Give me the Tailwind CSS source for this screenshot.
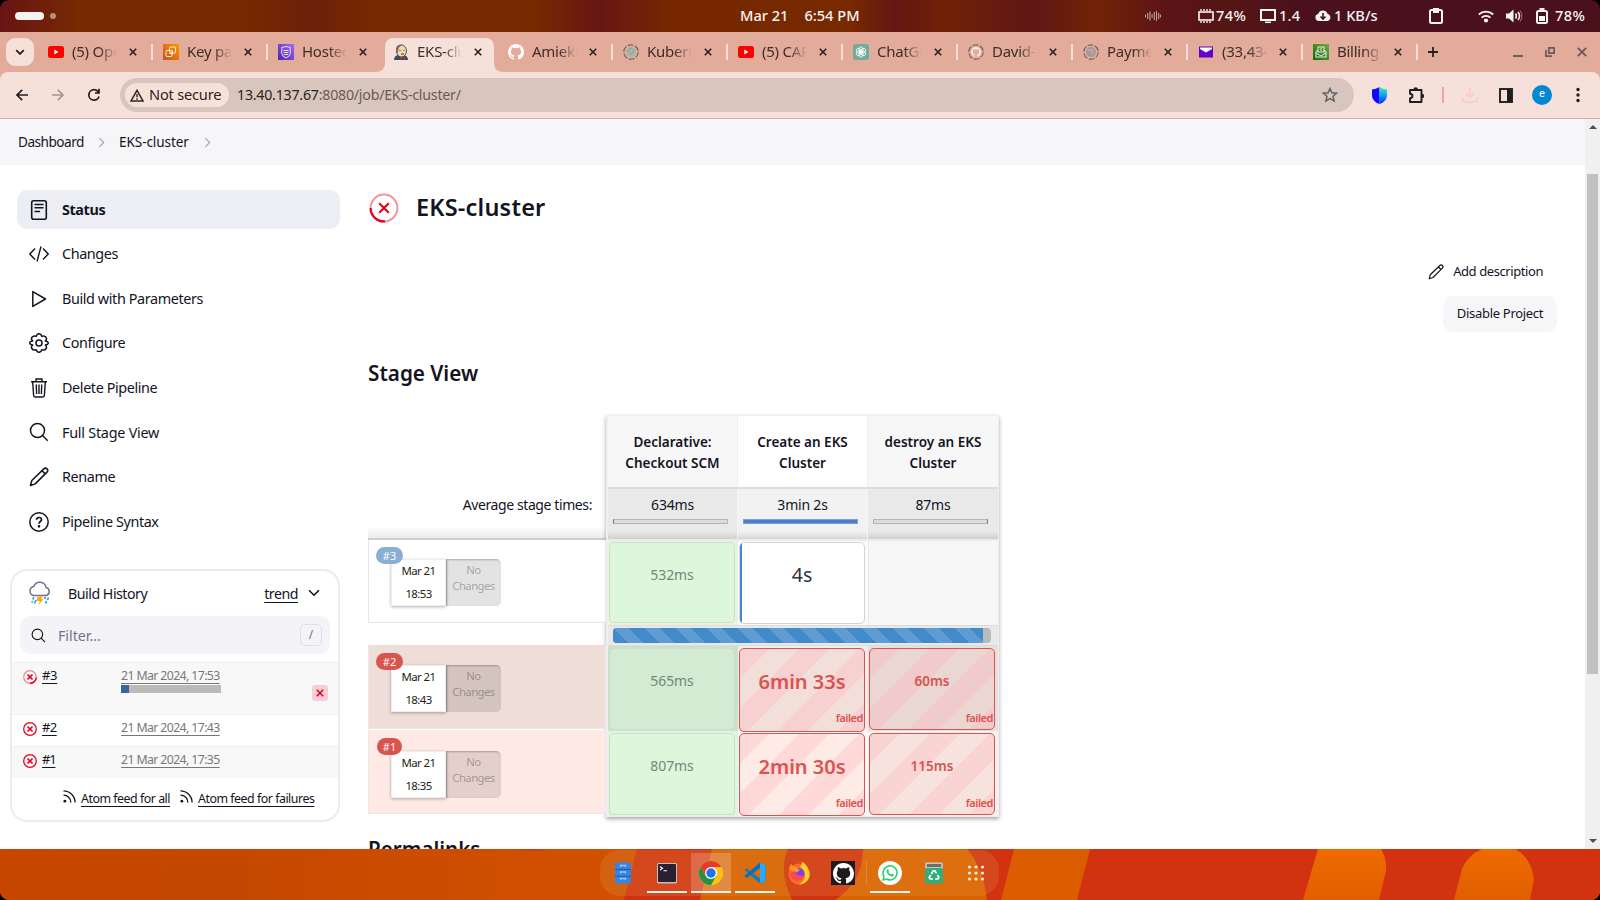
<!DOCTYPE html>
<html lang="en">
<head>
<meta charset="utf-8">
<title>EKS-cluster [Jenkins]</title>
<script src="https://cdn.jsdelivr.net/npm/@tailwindcss/browser@4"></script>
</head>
<body class="bg-black">
<svg class="hidden">
  <defs>
    <symbol id="close" viewBox="0 0 8 8"><path d="M.8.8l6.400 6.400M7.200.8L.8 7.200" stroke="currentColor" stroke-width="1.600"/></symbol>
    <symbol id="chev" viewBox="0 0 8 12"><path d="M1.500 1l5 5-5 5" fill="none" stroke="currentColor" stroke-width="1.400"/></symbol>
    <symbol id="pencil" viewBox="0 0 20 20"><path d="M1.500 18.500l1.300-5L14.800 1.900a2.200 2.200 0 013.200 3.200L6.200 16.900zM13 3.700l3.200 3.200" fill="none" stroke="currentColor" stroke-width="1.500" stroke-linejoin="round"/></symbol>
    <symbol id="search" viewBox="0 0 20 20"><circle cx="8.500" cy="8.500" r="7" fill="none" stroke="currentColor" stroke-width="1.500"/><path d="M13.500 13.500l5.200 5.200" stroke="currentColor" stroke-width="1.500"/></symbol>
    <symbol id="fail" viewBox="0 0 14 14"><circle cx="7" cy="7" r="6.300" fill="none" stroke="#e6001f" stroke-width="1.300"/><path d="M4.500 4.500l5 5m0-5l-5 5" stroke="#e6001f" stroke-width="1.700"/></symbol>
    <symbol id="feed" viewBox="0 0 14 14"><circle cx="2" cy="12" r="1.500" fill="currentColor"/><path d="M.5 5.500a8 8 0 018 8M.5 1a12.500 12.500 0 0112.500 12.500" fill="none" stroke="currentColor" stroke-width="1.400"/></symbol>
    <symbol id="yt" viewBox="0 0 16 12"><rect width="16" height="12" rx="2.500" fill="#f00"/><path d="M6.300 3.500L10.500 6 6.300 8.500z" fill="#fff"/></symbol>
    <symbol id="gh" viewBox="0 0 16 16"><path fill="currentColor" d="M8 0C3.580 0 0 3.580 0 8c0 3.540 2.290 6.530 5.470 7.590.4.070.55-.17.55-.38 0-.19-.01-.82-.01-1.490-2.010.37-2.530-.49-2.690-.94-.09-.23-.48-.94-.82-1.130-.28-.15-.68-.52-.01-.53.63-.01 1.080.58 1.230.82.72 1.210 1.870.87 2.330.66.070-.52.28-.87.51-1.070-1.780-.2-3.640-.89-3.640-3.950 0-.87.31-1.590.82-2.150-.08-.2-.36-1.020.08-2.120 0 0 .67-.21 2.200.82a7.600 7.600 0 014 0c1.530-1.040 2.200-.82 2.200-.82.44 1.100.16 1.920.08 2.120.51.56.82 1.270.82 2.150 0 3.070-1.870 3.750-3.650 3.950.29.25.54.73.54 1.480 0 1.070-.01 1.930-.01 2.200 0 .21.15.46.55.38A8 8 0 0016 8c0-4.420-3.580-8-8-8z"/></symbol>
    <symbol id="knot" viewBox="0 0 16 16"><g fill="none" stroke="currentColor" stroke-width="1"><ellipse cx="8" cy="5.200" rx="2.600" ry="3.600"/><ellipse cx="8" cy="5.200" rx="2.600" ry="3.600" transform="rotate(60 8 8)"/><ellipse cx="8" cy="5.200" rx="2.600" ry="3.600" transform="rotate(120 8 8)"/><ellipse cx="8" cy="5.200" rx="2.600" ry="3.600" transform="rotate(180 8 8)"/><ellipse cx="8" cy="5.200" rx="2.600" ry="3.600" transform="rotate(240 8 8)"/><ellipse cx="8" cy="5.200" rx="2.600" ry="3.600" transform="rotate(300 8 8)"/></g></symbol>
  </defs>
</svg>
<div class="w-[1600px] h-[900px] overflow-hidden rounded-[9px] flex flex-col text-[#14141f] font-['Noto_Sans',sans-serif]">

  <!-- System bar -->
  <header class="h-8 shrink-0 relative flex items-center text-[#f6f5f4] text-[14.6px] font-medium bg-[linear-gradient(90deg,#681416_0px,#772900_80px,#772900_240px,#6e2009_310px,#772900_380px,#772900_535px,#681614_600px,#762700_670px,#772900_850px,#641613_895px,#712206_945px,#5e1716_1030px,#722206_1095px,#5b1415_1170px,#551515_1230px,#4a111c_1300px,#4a111c_1600px)]">
    <div class="ml-[15px] w-[29px] h-2 rounded-full bg-[#f4f3f2]"></div>
    <div class="ml-[6px] w-[6px] h-[6px] rounded-full bg-[#b58f80]"></div>
    <div class="absolute left-[740px] flex gap-4 whitespace-nowrap"><span>Mar 21</span><span>6:54 PM</span></div>
    <div class="absolute left-[1145px] top-0 h-8 flex items-center whitespace-nowrap">
      <svg class="w-4 h-3" viewBox="0 0 16 12" stroke="#b9a09f" stroke-width="1.100"><path d="M.5 4.500v3M2.700 3v6M4.900 1.500v9M7.100 4v4M9.300 2v8M11.500 1v10M13.700 3v6M15.500 4.500v3"/></svg>
      <div class="ml-[37px] w-[62px] flex items-center gap-[2px]"><svg class="w-4 h-4" viewBox="0 0 16 16" fill="none" stroke="currentColor"><rect x="1" y="4" width="14" height="8" stroke-width="1.600"/><path d="M3 1v2m3-2v2m3-2v2m3-2v2M3 13v2m3-2v2m3-2v2m3-2v2" stroke-width="1.400"/></svg><span class="tracking-[0.4px]">74%</span></div>
      <div class="w-[55px] flex items-center gap-[3px]"><svg class="w-4 h-4" viewBox="0 0 16 16" fill="none" stroke="currentColor"><rect x="1" y="2" width="14" height="10" stroke-width="2"/><path d="M5 14.300h6" stroke-width="1.500"/></svg><span class="tracking-[0.2px]">1.4</span></div>
      <div class="w-[114px] flex items-center gap-[3px]"><svg class="w-4 h-4" viewBox="0 0 16 16"><path d="M4 13a3.600 3.600 0 01-.8-7.100A5 5 0 0112.700 6 3.600 3.600 0 0112.500 13z" fill="currentColor"/><path d="M8 5v6M5.500 8.500L8 11l2.500-2.500" fill="none" stroke="#4a111c" stroke-width="1.600"/></svg><span>1 KB/s</span></div>
      <svg class="w-[14px] h-4" viewBox="0 0 14 16"><rect x="1" y="2" width="12" height="13" rx="1.500" fill="none" stroke="currentColor" stroke-width="2"/><path d="M4 0h6v5H4z" fill="currentColor"/></svg>
      <svg class="ml-[35px] w-4 h-4" viewBox="0 0 16 16" fill="none" stroke="currentColor" stroke-width="1.800"><path d="M.8 6.500a10.500 10.500 0 0114.400 0M3.600 9.600a6.400 6.400 0 018.800 0"/><circle cx="8" cy="12.500" r="1.200" fill="currentColor"/></svg>
      <svg class="ml-3 w-[17px] h-4" viewBox="0 0 17 16"><path d="M0 5.500h3L7.500 1.500v13L3 10.500H0z" fill="currentColor"/><path d="M9.500 5.500q1.800 2.500 0 5M12 4q3 4 0 8" fill="none" stroke="currentColor" stroke-width="1.500"/><path d="M14 2.500q4 5.500 0 11" fill="none" stroke="currentColor" stroke-opacity=".45"/></svg>
      <svg class="ml-[13px] w-3 h-4" viewBox="0 0 12 16"><path d="M3.500 0h5v3h-5z" fill="currentColor"/><rect x="1" y="3" width="10" height="12" rx="1.500" fill="none" stroke="currentColor" stroke-width="2"/><path d="M3 8h6v5H3z" fill="currentColor"/></svg>
      <span class="ml-[7px] tracking-[0.4px]">78%</span>
    </div>
  </header>

  <!-- Browser tab strip -->
  <div class="h-10 shrink-0 flex items-end bg-[#e3ab99] text-[15px] text-[#3c2f2c]">
    <div class="ml-[6px] mb-[6px] w-7 h-7 rounded-[9px] bg-[#f6e0da] flex items-center justify-center"><svg class="w-[10px] h-[7px]" viewBox="0 0 10 7"><path d="M1.200 1.200L5 5l3.800-3.800" fill="none" stroke="#222" stroke-width="1.800"/></svg></div>
    <div id="tabs" class="ml-1 flex h-[34px]"></div>
    <svg class="ml-[10px] mb-[15px] w-[10px] h-[10px]" viewBox="0 0 10 10"><path d="M5 0v10M0 5h10" stroke="#222" stroke-width="1.800"/></svg>
    <div class="ml-auto mr-[13px] mb-[15px] flex items-center gap-[22px] text-[#6b5b5a]">
      <svg class="w-[10px] h-[10px]" viewBox="0 0 10 10"><path d="M0 9h10" stroke="currentColor" stroke-width="2"/></svg>
      <svg class="w-[10px] h-[10px]" viewBox="0 0 10 10" fill="none" stroke="currentColor" stroke-width="1.700"><path d="M3.800.9h5.300v5.300H3.800zM.9 3v6.100H7"/></svg>
      <svg class="w-[10px] h-[10px]" viewBox="0 0 10 10"><path d="M.8.8l8.400 8.400m0-8.400L.8 9.200" stroke="currentColor" stroke-width="1.900"/></svg>
    </div>
  </div>

  <!-- Toolbar -->
  <div class="h-[47px] shrink-0 bg-[#e3ab99]"><div class="h-full rounded-t-lg bg-[#f6e0da] border-b border-[#c9b4ad] flex items-center text-[#1f1f1f]">
    <svg class="ml-4 w-3 h-3" viewBox="0 0 12 12" fill="none" stroke="currentColor" stroke-width="1.700"><path d="M12 6H1.200M6.200 .8L1 6l5.200 5.200"/></svg>
    <svg class="ml-6 w-3 h-3" viewBox="0 0 12 12" fill="none" stroke="#a79691" stroke-width="1.700"><path d="M0 6h10.800M5.800 .8L11 6l-5.200 5.200"/></svg>
    <svg class="ml-6 w-3 h-[14px]" viewBox="0 0 12 14" fill="none" stroke="currentColor" stroke-width="1.700"><path d="M11 8.500A5.200 5.200 0 116 1.700c2 0 3.500 1 4.600 2.600M11 .8v4.200H7"/></svg>
    <div class="ml-5 w-[1234px] h-[34px] rounded-full bg-[#d8c5be] flex items-center pl-[5px]">
      <div class="w-[104px] h-6 rounded-full bg-[#f6e0da] flex items-center gap-[5px] pl-[5px] text-[14.600px] tracking-[-0.2px] text-[#2b2422] whitespace-nowrap"><svg class="w-[14px] h-[13px] shrink-0" viewBox="0 0 14 13"><path d="M7 1.300L13 12H1z" fill="none" stroke="#2b2422" stroke-width="1.500"/><path d="M7 5v3.200M7 9.200v1.500" stroke="#2b2422" stroke-width="1.400"/></svg><span>Not secure</span></div>
      <div class="ml-2 text-[14.200px] tracking-[-0.23px] text-[#6a5b57] whitespace-nowrap"><span class="text-[#2b2422]">13.40.137.67</span>:8080/job/EKS-cluster/</div>
      <svg class="ml-auto mr-4 w-4 h-4" viewBox="0 0 16 16"><path d="M8 1.500l1.900 4.300 4.700.4-3.600 3.100 1.100 4.600L8 11.500l-4.100 2.400L5 9.300 1.400 6.200l4.700-.4z" fill="none" stroke="#5f6368" stroke-width="1.500"/></svg>
    </div>
    <svg class="ml-[18px] w-[15px] h-[17px]" viewBox="0 0 15 17"><defs><linearGradient id="sg" x1="0" y1="0" x2="0" y2="1"><stop offset="0" stop-color="#3df0b0"/><stop offset=".5" stop-color="#0a9ff5"/><stop offset="1" stop-color="#0a20ff"/></linearGradient></defs><path d="M7.500 0C5 1.700 2.500 2.300 0 2.500V8c0 5 4 8 7.500 9z" fill="#0a0aff"/><path d="M7.500 0c2.500 1.700 5 2.300 7.500 2.500V8c0 5-4 8-7.500 9z" fill="url(#sg)"/></svg>
    <svg class="ml-[21px] w-[17px] h-[17px]" viewBox="0 0 17 17"><path d="M2 3h11.500v12H2v-3.800q2.500-.2 2.500-2.200T2 6.800z" fill="none" stroke="currentColor" stroke-width="1.900" stroke-linejoin="round"/><path d="M5.500 2.500a2.200 2.200 0 014.400 0zM14 6.800a2.200 2.200 0 010 4.400z" fill="currentColor"/></svg>
    <div class="ml-[17px] w-[2px] h-4 bg-[#e3ab99]"></div>
    <svg class="ml-[18px] w-4 h-4" viewBox="0 0 16 16" fill="none" stroke="#f9cfce" stroke-width="1.900"><path d="M8 0v10M3.800 6L8 10.200 12.200 6M1 11v4h14v-4"/></svg>
    <svg class="ml-[21px] w-[14px] h-[15px]" viewBox="0 0 14 15"><rect x="1" y="1" width="12" height="13" fill="none" stroke="currentColor" stroke-width="1.900"/><path d="M8 1h5v13H8z" fill="currentColor"/></svg>
    <div class="ml-[19px] w-5 h-5 rounded-full bg-[#0288d1] text-white text-[11px] leading-[18px] text-center font-['Roboto',sans-serif]">e</div>
    <svg class="ml-[24px] w-1 h-4" viewBox="0 0 4 16" fill="currentColor"><circle cx="2" cy="2.500" r="1.700"/><circle cx="2" cy="8" r="1.700"/><circle cx="2" cy="13.500" r="1.700"/></svg>
  </div></div>

  <!-- Page viewport -->
  <div class="h-[730px] shrink-0 flex bg-white overflow-hidden">
    <div class="w-[1585px] h-[730px] overflow-hidden">
      <nav class="h-[46px] bg-[#f6f6f9] flex items-center pl-[18px] text-[13.600px]">
        <span class="w-[66px] tracking-[-0.5px] whitespace-nowrap">Dashboard</span>
        <svg class="ml-[14px] w-[7px] h-[11px] text-[#a6a6b8]"><use href="#chev"/></svg>
        <span class="ml-[14px] w-[71px] tracking-[-0.1px] whitespace-nowrap">EKS-cluster</span>
        <svg class="ml-[14px] w-[7px] h-[11px] text-[#a6a6b8]"><use href="#chev"/></svg>
      </nav>
      <div class="flex">
        <!-- Side panel -->
        <aside class="w-[342px] shrink-0 pt-[25px]">
          <div class="ml-[17px] w-[323px] flex flex-col gap-[5.600px] text-[14.400px] tracking-[-0.4px] [&>div]:h-[39px] [&>div]:flex [&>div]:items-center [&>div]:gap-[13px] [&>div]:pl-3 [&_svg]:w-5 [&_svg]:h-5">
            <div class="rounded-[10px] bg-[#edeef3] font-bold"><svg viewBox="0 0 20 20" fill="none" stroke="currentColor" stroke-width="1.600"><rect x="2.700" y=".8" width="14.600" height="18.400" rx="2"/><path d="M6 4.500h8M6 7.800h8M6 11.500h4.500" stroke-width="1.400" stroke-linecap="round"/></svg>Status</div>
            <div><svg viewBox="0 0 20 20" fill="none" stroke="currentColor" stroke-width="1.400"><path d="M6 4.500L.8 10 6 15.500M14 4.500l5.200 5.500-5.200 5.500M12 2.500l-4 15"/></svg>Changes</div>
            <div><svg viewBox="0 0 20 20" fill="none" stroke="currentColor" stroke-width="1.500" stroke-linejoin="round"><path d="M3.800 2.600v14.800L16.500 10z"/></svg>Build with Parameters</div>
            <div><svg viewBox="0 0 20 20" fill="none" stroke="currentColor" stroke-width="1.500" stroke-linejoin="round"><path d="M7.200 3.300Q7.800.7 10 .7t2.800 2.600q2.900-.9 4.200.9 1.300 2-.7 3.800 3 .4 3 2t-3 2q2 1.800.7 3.800-1.300 1.800-4.200.9Q12.200 19.300 10 19.300t-2.800-2.600q-2.900.9-4.200-.9-1.300-2 .7-3.800-3-.4-3-2t3-2Q1.700 6.200 3 4.200q1.300-1.800 4.200-.9z"/><circle cx="10" cy="10" r="3"/></svg>Configure</div>
            <div><svg viewBox="0 0 20 20" fill="none" stroke="currentColor" stroke-width="1.400"><path d="M2 3.700h16M7 3.500V1h6v2.500M3.700 4l.9 13.300q.1 1.700 1.700 1.700h7.400q1.600 0 1.700-1.700L16.300 4M7.300 6.500l.3 9.500M10 6.500V16M12.700 6.500l-.3 9.500"/></svg>Delete Pipeline</div>
            <div class="tracking-[-0.25px]"><svg><use href="#search"/></svg>Full Stage View</div>
            <div><svg><use href="#pencil"/></svg>Rename</div>
            <div><svg viewBox="0 0 20 20" fill="none" stroke="currentColor" stroke-width="1.500"><circle cx="10" cy="10" r="9.200"/><path d="M7.500 7.800Q7.700 5.500 10 5.500t2.500 2.200c0 1.800-2.500 1.900-2.500 4" stroke-width="1.700"/><circle cx="10" cy="14.300" r=".6" fill="currentColor"/></svg>Pipeline Syntax</div>
          </div>

          <section class="ml-[10px] mt-[28px] w-[330px] h-[253px] border-2 border-[#ebebf2] rounded-[17px] overflow-hidden">
            <div class="h-[45px] pb-px flex items-center pl-[16px] pr-[18px] text-[14.200px] tracking-[-0.48px]">
              <svg class="w-6 h-6 shrink-0" viewBox="0 0 24 24"><path d="M5.500 14.500a4.600 4.600 0 01.3-9A6.300 6.300 0 0118 6.500a4.200 4.200 0 01.5 8z" fill="none" stroke="#73738c" stroke-width="1.500"/><path d="M5.800 16l-1 2.500M8 19l-1.500 3.500M17.500 16l-1 2M20.500 16.500l-1 2.500M18.500 20l-1 2.500M4.500 20l-.6 1.500" stroke="#29a3e8" stroke-width="1.700"/><path d="M9.500 15.500h5l-1.200 2.800h2L10.500 24l1.300-4H8.500z" fill="#fda61a"/></svg>
              <span class="ml-[16px]">Build History</span>
              <span class="ml-auto underline underline-offset-[3px]">trend</span>
              <svg class="ml-[10px] w-3 h-2" viewBox="0 0 12 8"><path d="M1 1.200l5 5 5-5" fill="none" stroke="currentColor" stroke-width="1.600"/></svg>
            </div>
            <div class="mx-2 h-[38px] rounded-[10px] bg-[#f3f3f8] flex items-center pl-[11px] pr-2 text-[14.200px] text-[#73738c]">
              <svg class="w-[15px] h-[15px] text-[#14141f]"><use href="#search"/></svg>
              <span class="ml-[12px]">Filter...</span>
              <span class="ml-auto w-[22px] h-[22px] border border-[#dfdfe8] rounded-[5px] text-center text-[12px] leading-5">/</span>
            </div>
            <div class="mt-2 text-[13px]">
              <div class="h-[52px] border-t border-[#efeff4] bg-[#f8f8f8] flex pt-[4px] pl-[11px] relative">
                <svg class="mt-[3px] w-[14px] h-[14px]" viewBox="0 0 14 14" fill="none" stroke="#e6001f"><circle cx="7" cy="7" r="6.300" stroke-opacity=".45" stroke-width="1.300"/><path d="M13.300 7.500A6.300 6.300 0 017 13.300" stroke-width="1.400"/><path d="M4.500 4.500l5 5m0-5l-5 5" stroke-width="1.700"/></svg>
                <span class="ml-[5px] w-[79px] leading-[17px] tracking-[-0.3px]"><u class="underline-offset-[3px]">#3</u></span>
                <div class="leading-[17px] text-[12.300px] tracking-[-0.61px] text-[#77777a] whitespace-nowrap"><span class="underline underline-offset-[3px]">21 Mar 2024, 17:53</span><div class="w-[100px] h-2 bg-[#bababa] mt-[1px]"><div class="w-2 h-2 bg-[#3465a4]"></div></div></div>
                <span class="absolute right-[10px] top-[22px] w-4 h-4 rounded-[3px] bg-[#f7ced5] flex items-center justify-center"><svg class="w-2 h-2 text-[#e6001f]"><use href="#close"/></svg></span>
              </div>
              <div class="h-8 border-t border-[#efeff4] flex pt-[4px] pl-[11px]">
                <svg class="mt-[3px] w-[14px] h-[14px]"><use href="#fail"/></svg><span class="ml-[5px] w-[79px] leading-[17px] tracking-[-0.6px]"><u class="underline-offset-[3px]">#2</u></span><span class="leading-[17px] text-[12.300px] tracking-[-0.61px] text-[#77777a] underline underline-offset-[3px]">21 Mar 2024, 17:43</span>
              </div>
              <div class="h-8 border-t border-[#efeff4] bg-[#f8f8f8] flex pt-[4px] pl-[11px]">
                <svg class="mt-[3px] w-[14px] h-[14px]"><use href="#fail"/></svg><span class="ml-[5px] w-[79px] leading-[17px] tracking-[-1.2px]"><u class="underline-offset-[3px]">#1</u></span><span class="leading-[17px] text-[12.300px] tracking-[-0.61px] text-[#77777a] underline underline-offset-[3px]">21 Mar 2024, 17:35</span>
              </div>
              <div class="pt-[12px] pl-[51px] flex text-[12.400px] leading-[18px] tracking-[-0.48px] whitespace-nowrap">
                <svg class="w-[13px] h-[13px]"><use href="#feed"/></svg><span class="ml-[5px] w-[89px]"><u class="underline-offset-[3px]">Atom feed for all</u></span>
                <svg class="ml-[10px] w-[13px] h-[13px]"><use href="#feed"/></svg><span class="ml-[5px] underline underline-offset-[3px]">Atom feed for failures</span>
              </div>
            </div>
          </section>
        </aside>

        <!-- Main panel -->
        <main class="ml-[26px] w-[1217px]">
          <div class="mt-[29px] h-7 flex items-center">
            <svg class="ml-[1px] w-[30px] h-[30px]" viewBox="0 0 30 30" fill="none" stroke="#e6001f"><circle cx="15" cy="15" r="13.400" stroke-opacity=".42" stroke-width="2"/><path d="M1.600 15A13.400 13.400 0 0016 28.400" stroke-width="2.200"/><path d="M10.200 10.200l9.600 9.600m0-9.600l-9.600 9.600" stroke-width="2.100"/></svg>
            <h1 class="ml-[17px] text-[23.500px] tracking-[0.2px] font-semibold">EKS-cluster</h1>
          </div>
          <div class="mt-[35px] flex flex-col items-end text-[13px]">
            <div class="h-[36px] mt-[-3px] mr-[42px] flex items-center gap-[9px] tracking-[-0.42px]"><svg class="w-4 h-4"><use href="#pencil"/></svg><span>Add description</span></div>
            <div class="mt-[6px] mr-[28px] w-[114px] h-9 rounded-[10px] bg-[#f6f6f9] flex items-center justify-center tracking-[-0.3px]">Disable Project</div>
          </div>
          <h2 class="mt-[27px] h-7 text-[20.700px] leading-7 font-semibold">Stage View</h2>

          <div class="mt-[28px] flex h-[402px]">
            <div id="builds" class="w-[238px] shrink-0">
              <div class="h-[125px] border-b-2 border-[#cfcfcf] bg-[linear-gradient(to_top,#ececec,#fff_12px)] pt-[80px] pr-[14px] text-right text-[14px] leading-5 tracking-[-0.4px]">Average stage times:</div>
            </div>
            <div id="stages" class="w-[393px] h-[402px] shrink-0 border border-l-2 border-[#eeeef0] shadow-[0_2px_4px_rgba(0,0,0,.35)]"></div>
          </div>
          <h2 class="mt-[18px] text-[20.600px] leading-7 font-semibold">Permalinks</h2>
        </main>
      </div>
    </div>
    <!-- Scrollbar -->
    <div class="w-[15px] bg-[#f0f0f1] flex flex-col items-center justify-between py-[6px]">
      <div class="border-x-4 border-x-transparent border-b-4 border-b-[#505050]"></div>
      <div class="mt-[45px] mb-auto w-[11px] h-[500px] bg-[#c1c1c1]"></div>
      <div class="border-x-4 border-x-transparent border-t-4 border-t-[#505050]"></div>
    </div>
  </div>

  <!-- Desktop and dock -->
  <div class="h-[51px] shrink-0 relative bg-[#c64600]">
    <svg class="absolute inset-0 w-[1600px] h-[51px]" viewBox="0 0 1600 51">
      <defs><linearGradient id="dk"><stop offset="0" stop-color="#c64600"/><stop offset=".15" stop-color="#c64700"/><stop offset=".35" stop-color="#d15000"/><stop offset="1" stop-color="#d65800"/></linearGradient><linearGradient id="or" x1="0" y1="1" x2="0" y2="0"><stop offset="0" stop-color="#e25f00"/><stop offset="1" stop-color="#ef6b00"/></linearGradient></defs>
      <path fill="url(#dk)" d="M0 0h1600v51H0z"/>
      <path fill="#cf3a10" d="M518 0h30q-15 4-30 0z"/>
      <path fill="#d2320f" d="M637 0h963v51H624z"/>
      <path fill="#d96000" d="M712 0h76q-10 22 4 51H700z"/>
      <path fill="#dc6200" d="M863 0h104q16 18 20 51H835q28-18 28-51z"/>
      <path fill="#dc5c00" d="M1014 0h76l-13 51h-76z"/>
      <path fill="url(#or)" d="M1318 0h63q6 10 5 22l-7 29h-76zM1454 51l8-31q6-14 20-20h33q16 8 19 30l-4 21z"/>
    </svg>
    <div class="absolute left-[600px] top-[1px] w-[399px] h-[46px] rounded-[20px] bg-[#eab266]/17 flex items-center pl-[3px] [&>div]:w-10 [&>div]:h-10 [&>div]:mr-1 [&>div]:shrink-0 [&>div]:flex [&>div]:items-center [&>div]:justify-center [&>div]:relative [&_i]:absolute [&_i]:bottom-0 [&_i]:w-10 [&_i]:h-[2px] [&_i]:bg-[#f6f3f1] [&_svg]:w-6 [&_svg]:h-6">
      <div><svg viewBox="0 0 24 24"><rect x="4" y="1.500" width="16" height="21" rx="1.500" fill="#3584e4"/><path d="M4 8.500h16M4 15.300h16" stroke="#1a5fb4" stroke-width="1"/><path d="M9.500 6V4.500h5V6M9.500 12.500V11h5v1.500M9.500 19v-1.500h5V19" fill="none" stroke="#99c1f1" stroke-width="1.300"/></svg></div>
      <div><svg viewBox="0 0 24 24"><rect x="2" y="2" width="20" height="20.500" rx="1.500" fill="#c0bfbc"/><rect x="3" y="3" width="18" height="18" rx="1" fill="#2a2033"/><path d="M5 5.500l2.500 1.700L5 9M8.500 9.800H12" fill="none" stroke="#fff" stroke-width="1.100"/></svg><i></i></div>
      <div class="bg-white/20"><svg viewBox="0 0 24 24"><circle cx="12" cy="12" r="12" fill="#fbc116"/><path d="M12 6h10.400A12 12 0 0112 24l5.200-9z" fill="#fbc116"/><path d="M1.600 6A12 12 0 0012 24l5.200-9H6.800z" fill="#229342"/><path d="M1.600 6A12 12 0 0122.400 6H12L6.800 15z" fill="#e33b2e"/><circle cx="12" cy="12" r="6" fill="#fff"/><circle cx="12" cy="12" r="4.700" fill="#1a73e8"/></svg><i></i></div>
      <div><svg viewBox="0 0 24 24"><path d="M17 1.500l5.500 2.500v16L17 22.500 1.500 9 3 7.500 4.500 8 17 17.500z" fill="#0d7ec8"/><path d="M1.500 15L17 1.500v5.500L4.500 16.500 3 16.800z" fill="#0a6fb5"/><path d="M17 1.500l5.500 2.500v16L17 22.500z" fill="#2ea8f0"/></svg><i></i></div>
      <div><svg viewBox="0 0 24 24"><circle cx="12" cy="13" r="10.500" fill="#ff6a2b"/><path d="M12 23.500A10.500 10.500 0 0022.500 11Q20 3 14.500.5q1 3-1.500 5.500 6 3 5 9t-6 8.500z" fill="#ffd02e"/><path d="M2 8q1-4 2.500-5 .5 2 2.500 3 3-.5 5 2l-5 3z" fill="#ff9a1f"/><circle cx="12" cy="12.500" r="5.200" fill="#7b3ff2"/><path d="M2 12q4-2 6 0 3 3 9 3-1.500 5-7 5-6-1-8-8z" fill="#ff4a4a"/><path d="M7 9q3-2 6 0l-4 3z" fill="#ff9a1f"/></svg></div>
      <div><span class="w-6 h-6 bg-[#1f1a1e] flex items-center justify-center text-white"><svg class="max-w-[21px] max-h-[21px]"><use href="#gh"/></svg></span></div>
      <div class="ml-[3px]"><svg viewBox="0 0 24 24"><circle cx="12" cy="12" r="12" fill="#fff"/><path d="M5 19l1-3.600A7 7 0 118.700 18z" fill="none" stroke="#25d366" stroke-width="1.500"/><path d="M9.600 8.200q.6-.2.900.5l.5 1.200-.7 1q1 1.900 2.800 2.600l1-.9 1.700.8q.3 1.600-1.700 2-3.700-.3-5.500-4.500-.2-2 1-2.700z" fill="#25d366"/></svg><i></i></div>
      <div><svg viewBox="0 0 24 24"><path d="M3.500 1.500h17l.5 6H3z" fill="#c9c9c4"/><path d="M5 3h14l.3 3H4.700z" fill="#6d6d6a"/><rect x="3" y="7" width="18" height="15.500" rx="1.500" fill="#2fae7c"/><path d="M9.300 13l2-3.200h1.500l1.700 2.600M15.500 14l1.300 2.300-1 1.700h-2.700M11 18H8.200l-1-1.700L8.700 14" fill="none" stroke="#fff" stroke-width="1.700"/></svg></div>
      <div class="ml-[-2px]"><svg viewBox="0 0 24 24" fill="#f6e6dc"><circle cx="5.500" cy="6" r="1.600"/><circle cx="12" cy="6" r="1.600"/><circle cx="18.500" cy="6" r="1.600"/><circle cx="5.500" cy="12" r="1.600"/><circle cx="12" cy="12" r="1.600"/><circle cx="18.500" cy="12" r="1.600"/><circle cx="5.500" cy="18" r="1.600"/><circle cx="12" cy="18" r="1.600"/><circle cx="18.500" cy="18" r="1.600"/></svg></div>
      <b class="absolute left-[266px] top-[11px] w-px h-6 bg-white/15"></b>
    </div>
  </div>
</div>

<script>
const ring = c => `<svg class="w-4 h-4 shrink-0" viewBox="0 0 16 16"><circle cx="8" cy="8" r="7.200" fill="none" stroke="#6f6a6b" stroke-width="1.200" stroke-dasharray="6 1.540"/>${c}</svg>`;
const aws = (a, b, c) => `<svg class="w-4 h-4 shrink-0" viewBox="0 0 16 16"><defs><linearGradient id="${a.slice(1)}" y1="1" y2="0"><stop offset="0" stop-color="${a}"/><stop offset="1" stop-color="${b}"/></linearGradient></defs><path fill="url(${a})" d="M0 0h16v16H0z"/><g fill="none" stroke="#fff" stroke-opacity=".85">${c}</g></svg>`;
const yt = '<svg class="w-4 h-3 shrink-0"><use href="#yt"/></svg>';
const tabs = [
  [yt, '(5) Open'],
  [aws('#c8511b', '#ff9900', '<rect x="6.500" y="3" width="6" height="6" rx="1"/><rect x="3" y="6.500" width="6" height="6" rx="1"/><path d="M6.500 9.500h3v-3"/>'), 'Key pairs'],
  [aws('#4d27a8', '#a166ff', '<path d="M3.500 3.500Q8 1.500 12.500 3.500L12 5q1.500 4-1 7L8 14l-3-2Q2.500 9 4 5z"/><path d="M5.500 6.500h5M5.500 8.500h5M6 10.500h4"/>'), 'Hosted z'],
  ['<svg class="w-4 h-4 shrink-0" viewBox="0 0 16 16"><path d="M1 16q0-4 4-5h6q4 1 4 5z" fill="#335061"/><ellipse cx="8.500" cy="7" rx="5" ry="6" fill="#efd9b0" stroke="#3a3532" stroke-width=".8"/><path d="M3.500 9Q1.500 2 6 .8q2-.5 4 .2-3 .5-4 2.500Q5 6 5 9z" fill="#7a7064"/><path d="M6.500 6.500h1m3 0h1M8 10h3" stroke="#3a3532"/><path d="M7 12.500l2.500 1.200L12 12.500V15l-2.500-1L7 15z" fill="#d33833"/></svg>', 'EKS-cluster'],
  ['<svg class="w-4 h-4 shrink-0 text-white"><use href="#gh"/></svg>', 'Amiekhi'],
  [ring('<circle cx="8" cy="8" r="5" fill="#a9b5a6"/><path d="M5 7l3 4 3-4-3-3z" fill="none" stroke="#7fa79b"/>'), 'Kuberne'],
  [yt, '(5) CAPS'],
  ['<svg class="w-4 h-4 shrink-0 text-white" viewBox="0 0 16 16"><rect width="16" height="16" rx="2.500" fill="#74aa9c"/><use href="#knot" x="1.500" y="1.500" width="13" height="13"/></svg>', 'ChatGPT'],
  [ring('<use href="#gh" x="3" y="3" width="10" height="10" color="#fae6e0"/>'), 'David-Ok'],
  [ring('<circle cx="8" cy="8" r="5" fill="#a39a9b"/><path d="M5 7q3-3 6 0M8 8l3 2" fill="none" stroke="#d9a99b" stroke-width="1.200"/>'), 'Payment'],
  ['<svg class="w-4 h-4 shrink-0" viewBox="0 0 16 16"><path fill="#5f01d1" d="M1 2.500h14v11H1z"/><path d="M2 3.500h12v1.500L8 8.500 2 5z" fill="#fff"/></svg>', '(33,434)'],
  [aws('#1b660f', '#6cae3e', '<rect x="5" y="3" width="6" height="5"/><path d="M3 13.500V7.500l2-1M13 13.500V7.500l-2-1M3 13h10M3 9l5 3 5-3M8 4v3"/>'), 'Billing a'],
];
document.getElementById('tabs').innerHTML = tabs.map(([icon, label], i) => {
  const on = i === 3;
  return `<div class="relative w-[115px] h-[34px]">
    ${on ? '<svg class="absolute left-[-8px] top-0 w-[131px] h-[34px]" viewBox="0 0 131 34"><path d="M0 34q10 0 10-9V9q0-9 9-9h91q9 0 9 9v16q0 9 10 9z" fill="#f6e0da"/></svg>' : ''}
    <div class="relative h-[27px] flex items-center pl-[10px]">${icon}
      <span class="ml-2 w-[45px] overflow-hidden whitespace-nowrap tracking-[-0.25px] [mask-image:linear-gradient(90deg,#000_60%,transparent)]">${label}</span>
      <svg class="ml-[12px] w-2 h-2 shrink-0 text-[#222]"><use href="#close"/></svg></div>
    ${i === 2 || i === 3 ? '' : '<b class="absolute right-0 top-[6px] w-[2px] h-4 bg-[#f6e0da]"></b>'}
  </div>`;
}).join('');

const rows = [
  ['#3', '18:53', 'h-[83px] bg-white mb-[22px] pt-[19px]', 'bg-[#8aaed4] top-[7px]', 'left-[7px] w-[27px]'],
  ['#2', '18:43', 'h-[84px] bg-[#efddd8] mb-[1px] pt-[20px]', 'bg-[#d9534f] top-[8px]', 'left-[7px] w-[27px]'],
  ['#1', '18:35', 'h-[84px] bg-[#ffe9e5] pt-[21px]', 'bg-[#d9534f] top-[8px]', 'left-[8px] w-[25px]'],
];
document.getElementById('builds').insertAdjacentHTML('beforeend', rows.map(([n, t, cls, badge, pos]) => `
  <div class="relative border border-t-0 border-[#e8e8ea] pl-[22px] ${cls}">
    <div class="flex h-[47px] w-[110px] text-center">
      <div class="w-[55px] bg-white border border-[#eee] shadow-[0_1px_3px_rgba(0,0,0,.3)] flex flex-col justify-between leading-[22px] text-[11.400px] tracking-[-0.6px] text-[#222]"><span>Mar 21</span><span>${t}</span></div>
      <div class="w-[55px] rounded-r-[5px] bg-black/11 shadow-[inset_1px_1px_2px_rgba(0,0,0,.25)] text-[11.300px] tracking-[-0.55px] leading-[15.500px] pt-[3px] text-black/30">No<br>Changes</div>
    </div>
    <span class="absolute ${pos} h-[17px] rounded-full ${badge} text-white text-[11px] leading-[17px] text-center">${n}</span>
  </div>`).join(''));

const head = (t, cls) => `<div class="${cls} pt-[16px] text-center text-[13.500px] leading-[21px] font-semibold">${t}</div>`;
const avg = (t, cls, bar) => `<div class="${cls} pt-[6px] px-[5px] text-center text-[14px] leading-[19px] tracking-[-0.2px] shadow-[inset_0_-9px_8px_-8px_rgba(0,0,0,.2)]">${t}<div class="mt-[5px] w-[115px] h-[5px] border ${bar}"></div></div>`;
const stripes = 'bg-[linear-gradient(135deg,rgba(255,180,190,.35)_25%,transparent_25%,transparent_50%,rgba(255,180,190,.35)_50%,rgba(255,180,190,.35)_75%,transparent_75%)] bg-[length:60px_60px]';
const ok = (t, bg, cell) => `<div class="${bg} pl-[1px] pr-[3px]"><div class="${cell} rounded-[5px] border border-[#cfdccf] text-center text-[14px] leading-[64px] tracking-[-0.1px] text-[#74877a]">${t}</div></div>`;
const bad = (t, size, bg, cell) => `<div class="${bg} pl-[1px] pr-[3px] pt-[2px]"><div class="relative rounded-[5px] border border-[#d9534f] ${cell} ${stripes} text-center ${size} leading-[65px] font-semibold text-[#d9534f]">${t}<span class="absolute right-[1px] top-[61px] text-[11px] tracking-[-0.45px] leading-4">failed</span></div></div>`;
document.getElementById('stages').innerHTML = `
  <div class="grid grid-cols-3 h-[71px]">${head('Declarative:<br>Checkout SCM', 'bg-[#f7f7f7] border-r border-[#eee]')}${head('Create an EKS<br>Cluster', 'bg-white border-r border-[#eee]')}${head('destroy an EKS<br>Cluster', 'bg-[#f7f7f7]')}</div>
  <div class="grid grid-cols-3 h-[52px] border-t-2 border-[#dcdcdc]">${avg('634ms', 'bg-[#e9e9e9] border-r border-[#f5f5f5]', 'border-[#b5b5b5] border-l-[#4a7fc0] bg-[#dcdcdc]')}${avg('3min 2s', 'bg-[#f2f2f2] border-r border-[#f5f5f5]', 'border-[#7aa0cd] bg-[#4a7bd0]')}${avg('87ms', 'bg-[#e9e9e9]', 'border-[#b5b5b5] border-r-[#4a7fc0] bg-[#dcdcdc]')}</div>
  <div class="grid grid-cols-3 h-[86px] border-t-2 border-[#ececec]">
    ${ok('532ms', 'bg-[#e6f3e4] pt-[1px]', 'h-[81px] bg-[#ddf7dd]')}
    <div class="bg-[#fafafa] pl-[1px] pr-[3px] pt-[1px]"><div class="h-[82px] rounded-[5px] border border-[#d3d3d8] bg-white overflow-hidden flex"><div class="w-[2px] bg-[#428bca]"></div><div class="flex-1 pr-[2px] text-center text-[19.500px] leading-[64px] text-[#33333d]">4s</div></div></div>
    <div class="bg-[#f7f7f7] border-l border-[#eaeaea]"></div>
  </div>
  <div class="h-[21px] bg-[#e9e9e9] border-y border-[#dcdcdc] pt-[2px] px-[5px]"><div class="w-[378px] h-[15px] rounded-[4px] overflow-hidden bg-[linear-gradient(90deg,#888,#bbb)]"><div class="w-[370px] h-[15px] bg-[#428bca] bg-[linear-gradient(45deg,rgba(255,255,255,.15)_25%,transparent_25%,transparent_50%,rgba(255,255,255,.15)_50%,rgba(255,255,255,.15)_75%,transparent_75%)] bg-[length:31px_31px]"></div></div></div>
  <div class="grid grid-cols-3 h-[85px]">${ok('565ms', 'bg-[#c9e2c9] pt-[2px]', 'h-[82px] bg-[#d2ebd2]')}${bad('6min 33s', 'text-[20px]', 'bg-[#eee]', 'h-[84px] bg-[#f2dfda]')}${bad('60ms', 'text-[13.500px]', 'bg-[#e4e0e0]', 'h-[82px] bg-[#ead7d2]')}</div>
  <div class="grid grid-cols-3 h-[85px]">${ok('807ms', 'bg-[#e0f4e0] pt-[2px]', 'h-[82px] bg-[#ddf7dd]')}${bad('2min 30s', 'text-[20px]', 'bg-[#f8f8f8]', 'h-[83px] bg-[#ffebe6]')}${bad('115ms', 'text-[13.500px]', 'bg-[#f3f0f0]', 'h-[82px] bg-[#f7e3de]')}</div>`;
</script>
</body>
</html>
